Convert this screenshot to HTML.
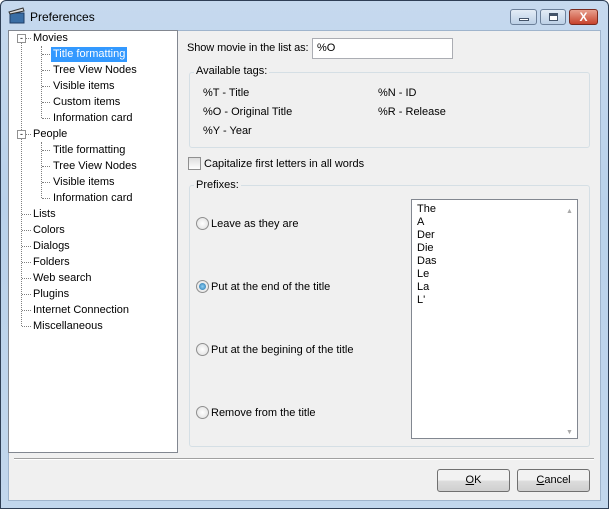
<!DOCTYPE html>
<html><head><style>
*{margin:0;padding:0;box-sizing:border-box}
body{width:609px;height:509px;overflow:hidden;background:#fff;font-family:"Liberation Sans",sans-serif;font-size:11px;color:#000;position:relative}
.a{position:absolute;white-space:nowrap;line-height:14px}
.frame{position:absolute;left:0;top:0;width:609px;height:509px;background:linear-gradient(#c6d9ee,#b9d1ea 40%,#c2d7ed);border:1px solid #2f3f55;border-radius:6px 6px 0 0}
.client{position:absolute;left:8px;top:30px;width:593px;height:471px;background:#f0f0f0;border:1px solid #9fb4cc}
.grp{position:absolute;border:1px solid #d5dfe5;border-radius:3px}
.lbl{position:absolute;background:#f0f0f0;padding:0 2px;line-height:14px}
.btn{position:absolute;width:73px;height:23px;border:1px solid #707070;border-radius:3px;background:linear-gradient(#f2f2f2 50%,#dddddd 50%,#cfcfcf);text-align:center;line-height:21px}
.radio{position:absolute;width:13px;height:13px;border-radius:50%;border:1px solid #8f8f8f;background:radial-gradient(#fff,#ddd)}
.dot{position:absolute;border-left:1px dotted #808080;width:0}
.hd{position:absolute;border-top:1px dotted #808080;height:0}
</style></head><body>
<div class="frame"></div>
<svg class="a" style="left:8px;top:7px" width="18" height="18"><rect x="2" y="6" width="14" height="10" fill="#3a6ea5" stroke="#1d3d66"/><path d="M1 5 L15 1 L16 4 L2 7Z" fill="#ddd" stroke="#333"/></svg>
<div class="a" style="left:30px;top:10px;font-size:12px">Preferences</div>
<div class="a" style="left:510px;top:9px;width:27px;height:16px;border:1px solid #6b7f99;border-radius:3px;background:linear-gradient(#e3ecf6,#bcd0e6)"><div style="position:absolute;left:8px;top:8px;width:10px;height:3px;background:#fff;border:1px solid #44546a"></div></div>
<div class="a" style="left:540px;top:9px;width:26px;height:16px;border:1px solid #6b7f99;border-radius:3px;background:linear-gradient(#e3ecf6,#bcd0e6)"><div style="position:absolute;left:8px;top:3px;width:9px;height:8px;background:#fff;border:1px solid #44546a;border-top-width:3px"></div></div>
<div class="a" style="left:569px;top:9px;width:29px;height:16px;border:1px solid #7a2a1e;border-radius:3px;background:linear-gradient(#e8a08e,#c7432c);color:#fff;font-weight:bold;text-align:center;line-height:14px;font-size:12px">X</div>
<div class="client"></div>
<!-- tree -->
<div class="a" style="left:8px;top:30px;width:170px;height:423px;background:#fff;border:1px solid #828790"></div>
<div class="a" style="left:17px;top:34px;width:9px;height:9px;border:1px solid #919191;background:#fff;font-size:9px;line-height:6px;text-align:center">-</div>
<div class="a" style="left:17px;top:130px;width:9px;height:9px;border:1px solid #919191;background:#fff;font-size:9px;line-height:6px;text-align:center">-</div>
<div class="dot" style="left:21px;top:43px;height:87px"></div>
<div class="dot" style="left:21px;top:139px;height:187px"></div>
<div class="dot" style="left:41px;top:46px;height:72px"></div>
<div class="dot" style="left:41px;top:142px;height:56px"></div>
<div class="hd" style="left:26px;top:38px;width:5px"></div><div class="hd" style="left:26px;top:134px;width:5px"></div>
<div class="hd" style="left:42px;top:54px;width:8px"></div><div class="hd" style="left:42px;top:70px;width:8px"></div><div class="hd" style="left:42px;top:86px;width:8px"></div><div class="hd" style="left:42px;top:102px;width:8px"></div><div class="hd" style="left:42px;top:118px;width:8px"></div>
<div class="hd" style="left:42px;top:150px;width:8px"></div><div class="hd" style="left:42px;top:166px;width:8px"></div><div class="hd" style="left:42px;top:182px;width:8px"></div><div class="hd" style="left:42px;top:198px;width:8px"></div>
<div class="hd" style="left:22px;top:214px;width:9px"></div><div class="hd" style="left:22px;top:230px;width:9px"></div><div class="hd" style="left:22px;top:246px;width:9px"></div><div class="hd" style="left:22px;top:262px;width:9px"></div><div class="hd" style="left:22px;top:278px;width:9px"></div><div class="hd" style="left:22px;top:294px;width:9px"></div><div class="hd" style="left:22px;top:310px;width:9px"></div><div class="hd" style="left:22px;top:326px;width:9px"></div>
<div class="a" style="left:33px;top:31px">Movies</div>
<div class="a" style="left:51px;top:47px;background:#3399ff;color:#fff;padding:0 2px;height:15px">Title formatting</div>
<div class="a" style="left:53px;top:63px">Tree View Nodes</div>
<div class="a" style="left:53px;top:79px">Visible items</div>
<div class="a" style="left:53px;top:95px">Custom items</div>
<div class="a" style="left:53px;top:111px">Information card</div>
<div class="a" style="left:33px;top:127px">People</div>
<div class="a" style="left:53px;top:143px">Title formatting</div>
<div class="a" style="left:53px;top:159px">Tree View Nodes</div>
<div class="a" style="left:53px;top:175px">Visible items</div>
<div class="a" style="left:53px;top:191px">Information card</div>
<div class="a" style="left:33px;top:207px">Lists</div>
<div class="a" style="left:33px;top:223px">Colors</div>
<div class="a" style="left:33px;top:239px">Dialogs</div>
<div class="a" style="left:33px;top:255px">Folders</div>
<div class="a" style="left:33px;top:271px">Web search</div>
<div class="a" style="left:33px;top:287px">Plugins</div>
<div class="a" style="left:33px;top:303px">Internet Connection</div>
<div class="a" style="left:33px;top:319px">Miscellaneous</div>
<!-- right -->
<div class="a" style="left:187px;top:41px;letter-spacing:-0.1px">Show movie in the list as:</div>
<div class="a" style="left:312px;top:38px;width:141px;height:21px;background:#fff;border:1px solid #abadb3;padding-left:4px;line-height:19px">%O</div>
<div class="grp" style="left:189px;top:72px;width:401px;height:76px"></div>
<div class="lbl" style="left:194px;top:64px">Available tags:</div>
<div class="a" style="left:203px;top:86px">%T - Title</div>
<div class="a" style="left:203px;top:105px">%O - Original Title</div>
<div class="a" style="left:203px;top:124px">%Y - Year</div>
<div class="a" style="left:378px;top:86px">%N - ID</div>
<div class="a" style="left:378px;top:105px">%R - Release</div>
<div class="a" style="left:188px;top:157px;width:13px;height:13px;border:1px solid #8f8f8f;background:linear-gradient(#ddd,#fff)"></div>
<div class="a" style="left:204px;top:157px">Capitalize first letters in all words</div>
<div class="grp" style="left:189px;top:185px;width:401px;height:262px"></div>
<div class="lbl" style="left:194px;top:178px">Prefixes:</div>
<div class="radio" style="left:196px;top:217px"></div><div class="a" style="left:211px;top:217px">Leave as they are</div>
<div class="radio" style="left:196px;top:280px"><div style="position:absolute;left:2px;top:2px;width:7px;height:7px;border-radius:50%;background:radial-gradient(#8fd0f5,#1e6fa8)"></div></div><div class="a" style="left:211px;top:280px">Put at the end of the title</div>
<div class="radio" style="left:196px;top:343px"></div><div class="a" style="left:211px;top:343px">Put at the begining of the title</div>
<div class="radio" style="left:196px;top:406px"></div><div class="a" style="left:211px;top:406px">Remove from the title</div>
<div class="a" style="left:411px;top:199px;width:167px;height:240px;background:#fff;border:1px solid #828790"></div>
<div class="a" style="left:417px;top:203px;line-height:13px">The<br>A<br>Der<br>Die<br>Das<br>Le<br>La<br>L'</div>
<div class="a" style="left:566px;top:205px;font-size:7px;color:#aaa">▲</div>
<div class="a" style="left:566px;top:426px;font-size:7px;color:#aaa">▼</div>
<div class="a" style="left:14px;top:458px;width:580px;height:2px;border-top:1px solid #a0a0a0;border-bottom:1px solid #fff"></div>
<div class="btn" style="left:437px;top:469px"><u>O</u>K</div>
<div class="btn" style="left:517px;top:469px"><u>C</u>ancel</div>
</body></html>
